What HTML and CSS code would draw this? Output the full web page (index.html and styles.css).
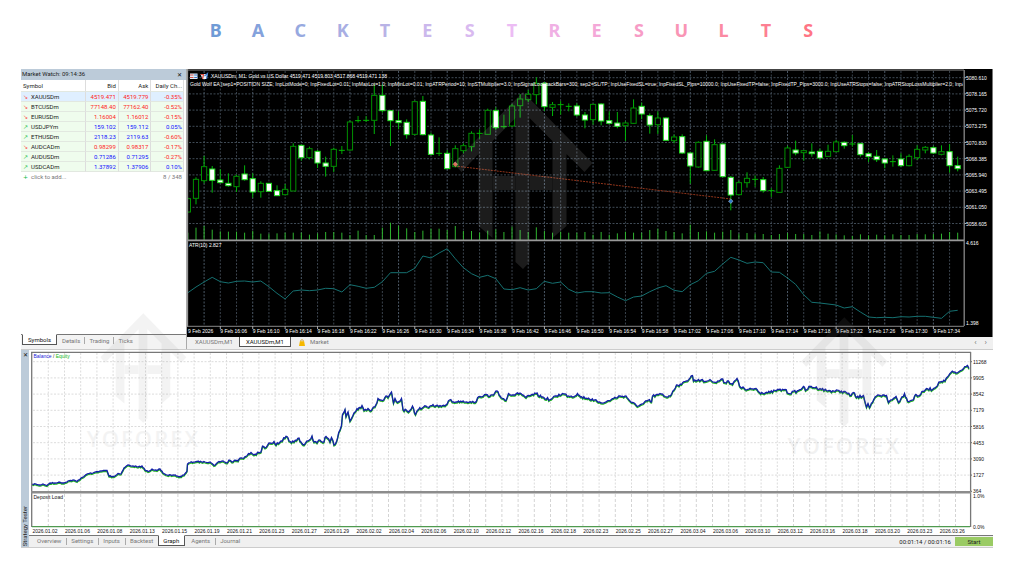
FILE: index.html
```html
<!DOCTYPE html>
<html lang="en">
<head>
<meta charset="utf-8">
<title>Backtest Results</title>
<link rel="stylesheet" href="styles.css">
</head>
<body>
<svg class="defs" aria-hidden="true">
  <symbol id="arrow-mark" viewBox="0 0 139 177">
    <path d="M69.5 0 139 71 131 80 113 62V134L99 146V49L76 26V170L69.500 177 62 170V26L39 49V146L25 134V62L8 80 0 71Z"/>
    <path d="M39 84H62V98H39ZM76 84H99V98H76Z"/>
  </symbol>
</svg>

<h1 class="title" aria-label="Backtest Results">
  <span>B</span><span>A</span><span>C</span><span>K</span><span>T</span><span>E</span><span>S</span><span>T</span><span>R</span><span>E</span><span>S</span><span>U</span><span>L</span><span>T</span><span>S</span>
</h1>

<main class="terminal">
  <div class="upper">
    <section class="watch">
      <header class="watch-head">
        <span>Market Watch: 09:14:36</span>
        <button class="close" type="button" aria-label="Close Market Watch">✕</button>
      </header>
      <table class="quotes">
        <thead><tr><th>Symbol</th><th>Bid</th><th>Ask</th><th>Daily Ch...</th></tr></thead>
        <tbody>
          <tr class="selected"><td><i class="dn">↘</i>XAUUSDm</td><td class="red">4519.471</td><td class="red">4519.779</td><td class="red">-0.35%</td></tr>
          <tr><td><i class="dn">↘</i>BTCUSDm</td><td class="red">77148.40</td><td class="red">77162.40</td><td class="red">-0.52%</td></tr>
          <tr><td><i class="dn">↘</i>EURUSDm</td><td class="red">1.16004</td><td class="red">1.16012</td><td class="red">-0.15%</td></tr>
          <tr><td><i class="up">↗</i>USDJPYm</td><td class="blue">159.102</td><td class="blue">159.112</td><td class="blue">0.05%</td></tr>
          <tr><td><i class="up">↗</i>ETHUSDm</td><td class="blue">2118.23</td><td class="blue">2119.63</td><td class="red">-0.60%</td></tr>
          <tr><td><i class="dn">↘</i>AUDCADm</td><td class="red">0.98299</td><td class="red">0.98317</td><td class="red">-0.17%</td></tr>
          <tr><td><i class="up">↗</i>AUDUSDm</td><td class="blue">0.71286</td><td class="blue">0.71295</td><td class="red">-0.27%</td></tr>
          <tr><td><i class="up">↗</i>USDCADm</td><td class="blue">1.37892</td><td class="blue">1.37906</td><td class="blue">0.10%</td></tr>
        </tbody>
      </table>
      <div class="watch-add"><span><i class="up">+</i>click to add...</span><span>8 / 348</span></div>
      <nav class="tabs watch-tabs">
        <button class="tab active" type="button">Symbols</button>
        <button class="tab" type="button">Details</button>
        <button class="tab" type="button">Trading</button>
        <button class="tab" type="button">Ticks</button>
      </nav>
    </section>

    <section class="chart">
      <svg id="price" class="plot dark" viewBox="187 69 806 268" role="img" aria-label="XAUUSDm M1 price chart"></svg>
      <nav class="tabs chart-tabs">
        <button class="tab" type="button">XAUUSDm,M1</button>
        <button class="tab active" type="button">XAUUSDm,M1</button>
        <button class="tab market" type="button">
          <svg class="bag" viewBox="0 0 7 8" aria-hidden="true"><path d="M2 3V1.500Q3.500 0 5 1.500V3" fill="none" stroke="#c99a2a"/><path d="M1 2.500H6L7 8H0Z" fill="#f6b800"/></svg>Market
        </button>
        <span class="arrows"><button type="button" aria-label="Scroll left">‹</button><button type="button" aria-label="Scroll right">›</button></span>
      </nav>
    </section>
  </div>

  <section class="tester">
    <aside class="rail">
      <button class="close" type="button" aria-label="Close Strategy Tester">✕</button>
      <span class="rail-name">Strategy Tester</span>
    </aside>
    <div class="tester-body">
      <svg id="balance" class="plot" viewBox="29 351 964 184" role="img" aria-label="Balance and equity graph"></svg>
      <footer class="tester-bar">
        <nav class="tabs tester-tabs">
          <button class="tab" type="button">Overview</button>
          <button class="tab" type="button">Settings</button>
          <button class="tab" type="button">Inputs</button>
          <button class="tab" type="button">Backtest</button>
          <button class="tab active" type="button">Graph</button>
          <button class="tab" type="button">Agents</button>
          <button class="tab" type="button">Journal</button>
        </nav>
        <span class="elapsed">00:01:14 / 00:01:16</span>
        <button class="start" type="button">Start</button>
      </footer>
    </div>
  </section>

  <div class="brand brand-left" aria-hidden="true"><svg><use href="#arrow-mark"/></svg><span>YOFOREX</span></div>
  <div class="brand brand-right" aria-hidden="true"><svg><use href="#arrow-mark"/></svg><span>YOFOREX</span></div>
</main>
<script src="charts.js"></script>
</body>
</html>
```

FILE: styles.css
```css
* { box-sizing: border-box; }

body {
  margin: 0;
  background: #fff;
  color: #222;
  font-family: Roboto, "Noto Sans", sans-serif;
  font-size: 6px;
  line-height: 10px;
}

button {
  margin: 0;
  padding: 0;
  border: 0;
  background: none;
  color: inherit;
  font: inherit;
}

.defs { position: absolute; width: 0; height: 0; }

.title {
  display: grid;
  grid-template-columns: repeat(15, 1fr);
  width: 62%;
  height: 69px;
  margin: 0 auto;
  padding: 18px 0 0;
  font-family: "Noto Sans", sans-serif;
  font-size: 18px;
  font-weight: 700;
  line-height: 24px;
  text-align: center;
}
.title span:nth-child(1) { color: #6f9bd6; }
.title span:nth-child(2) { color: #84a2dc; }
.title span:nth-child(3) { color: #97a9e0; }
.title span:nth-child(4) { color: #a8aee3; }
.title span:nth-child(5) { color: #b9b3e6; }
.title span:nth-child(6) { color: #cbb8ec; }
.title span:nth-child(7) { color: #d9baf0; }
.title span:nth-child(8) { color: #ecbcf4; }
.title span:nth-child(9) { color: #f0b0e4; }
.title span:nth-child(10) { color: #f4a8d8; }
.title span:nth-child(11) { color: #f79cc6; }
.title span:nth-child(12) { color: #f995b5; }
.title span:nth-child(13) { color: #fb8aa2; }
.title span:nth-child(14) { color: #fd7f92; }
.title span:nth-child(15) { color: #ff7585; }

.terminal {
  position: relative;
  margin: 0 31px 0 21px;
}

.upper {
  display: grid;
  grid-template-columns: 166fr 806fr;
}

.plot { display: block; width: 100%; height: auto; }
.plot text { font-family: "Liberation Sans", Arial, sans-serif; font-size: 5px; }
.dark { background: #000; }

/* Market watch */
.watch {
  display: flex;
  flex-direction: column;
  border-right: 1px solid #aaa;
}
.watch-head {
  display: flex;
  justify-content: space-between;
  height: 11px;
  padding: 0 4px 0 1px;
  background: #bccbd9;
}
.close { font-size: 6px; line-height: 10px; color: #111; }

.quotes {
  width: 163px;
  max-width: 100%;
  border-collapse: separate;
  border-spacing: 0;
  table-layout: fixed;
}
.quotes th, .quotes td {
  height: 10px;
  padding: 0 2px;
  border-right: 1px solid #ddd;
  border-bottom: 1px solid #e2e8e0;
  line-height: 9px;
  text-align: right;
  white-space: nowrap;
}
.quotes th { height: 12px; width: 20%; font-weight: 400; }
.quotes th:first-child { width: 40%; }
.quotes th:first-child, .quotes td:first-child { text-align: left; }
.quotes td { background: #effced; }
.quotes td:last-child, .quotes th:last-child { padding: 0 1px; }
.quotes .selected td { background: #dfefff; }
.red { color: #f22; }
.blue { color: #11f; }
i { display: inline-block; width: 8px; font-family: "DejaVu Sans", sans-serif; font-style: normal; line-height: 8px; }
.dn { color: #f44; }
.up { color: #1b4; }
.watch-add {
  display: flex;
  justify-content: space-between;
  padding: 0 4px 0 2px;
  color: #777;
}

/* Tab strips */
.tabs { display: flex; color: #777; }
.tab { position: relative; line-height: 9px; white-space: nowrap; }
.tab.active { border: 1px solid #555; background: #fff; color: #111; }
.watch-tabs {
  gap: 9px;
  height: 15px;
  margin-top: auto;
  padding: 0 0 0 1px;
  border-top: 1px solid #777;
  background: #f3f3f3;
}
.watch-tabs .tab.active { margin: -1px -4px 0 0; padding: 0 5px; border-top-color: #fff; height: 11px; }
.watch-tabs .tab { height: 10px; }
.watch-tabs .tab + .tab + .tab::before,
.tester-tabs .tab + .tab:not(.active):not(.active + .tab)::before {
  content: "";
  position: absolute;
  left: -5px;
  top: 2px;
  height: 7px;
  border-left: 1px solid #aaa;
}
.chart-tabs {
  height: 12px;
  padding-left: 8px;
  background: #f0f0f0;
}
.chart-tabs .tab { height: 10px; line-height: 10px; }
.chart-tabs .tab.active { margin: 0 8px 0 6px; padding: 0 6px; border-top: 0; line-height: 9px; }
.market { display: flex; align-items: center; gap: 5px; }
.bag { width: 6px; height: 7px; }
.arrows { display: flex; gap: 8px; margin-left: auto; padding-right: 6px; font-size: 8px; }

/* Strategy tester */
.tester {
  display: grid;
  grid-template-columns: 8px 1fr;
  border-top: 1px solid #ccc;
  border-bottom: 1px solid #ccc;
}
.rail {
  display: flex;
  flex-direction: column;
  align-items: center;
  justify-content: space-between;
  padding-bottom: 1px;
  background: #bccbd9;
}
.rail-name { writing-mode: vertical-rl; transform: rotate(180deg); line-height: 8px; }
.tester-body { padding-top: 1px; }
.tester-bar {
  display: flex;
  align-items: center;
  height: 12px;
  border-top: 1px solid #777;
  background: #f0f0f0;
}
.tester-tabs { flex: 1; gap: 10px; padding-left: 8px; }
.tester-tabs .tab { height: 11px; padding-bottom: 2px; }
.tester-tabs .tab.active { margin: -1px -4px 0 -5px; padding: 0 5px 1px 4px; border-top-color: #fff; height: 11px; }
.elapsed { margin-right: 4px; }
.start {
  width: 38px;
  height: 9px;
  background: #9acb64;
  line-height: 9px;
}

/* Watermarks over the workspace */
.brand {
  position: absolute;
  top: 248px;
  display: flex;
  flex-direction: column;
  align-items: center;
  gap: 6px;
  color: #888;
  opacity: 0.11;
  transform: translateX(-50%);
  pointer-events: none;
}
.brand svg { width: 86px; height: 110px; fill: currentColor; }
.brand span { font-family: "Open Sans", sans-serif; font-size: 22px; font-weight: 600; line-height: 24px; letter-spacing: 2px; }
.brand-left { top: 244px; left: 12.6%; gap: 3px; opacity: 0.09; }
.brand-right { left: 84.7%; }
```

FILE: charts.js
```js
const NS = "http://www.w3.org/2000/svg";

function add(parent, name, attrs, text) {
  const node = document.createElementNS(NS, name);
  for (const key in attrs) node.setAttribute(key, attrs[key]);
  if (text !== undefined) node.textContent = text;
  parent.appendChild(node);
  return node;
}
const line = (p, x1, y1, x2, y2, stroke, extra) =>
  add(p, "line", Object.assign({ x1, y1, x2, y2, stroke }, extra));

/* high, body top, body bottom, low, kind: u = hollow, d = filled, x = doji */
const candles = `395 398 438 440 u|334 340 397 415 u|270 302 344 352 u|300 309 343 380 d|310 342 350 350 d|322 352 359 362 d|326 331 362 378 u|298 324 341 344 d
322 338 378 395 d|346 352 377 395 u|352 352 376 376 d|358 374 389 389 d|354 370 386 388 u|232 241 375 375 u|235 238 275 284 d|242 248 275 280 u
252 256 291 306 d|272 291 301 332 d|245 250 301 318 u|240 253 253 264 x|164 168 252 254 u|150 164 164 170 x|150 163 163 168 x|55 88 163 204 u
55 88 134 140 d|132 134 164 240 d|136 164 170 190 d|160 169 206 218 d|104 107 205 208 u|90 106 206 208 d|200 207 265 268 d|214 262 262 270 x
252 262 308 308 d|238 248 302 304 u|232 239 254 262 u|196 202 242 256 u|190 202 202 218 x|128 133 205 206 u|124 134 185 192 d|146 182 182 188 x
114 120 180 182 u|84 99 119 155 u|72 85 101 108 u|34 52 86 115 u|48 52 122 135 d|108 116 124 150 u|105 116 116 146 x|112 121 121 136 x
112 120 147 152 d|138 147 162 187 d|114 115 161 176 u|112 114 165 178 d|136 164 172 175 d|138 171 181 187 d|166 171 179 225 u|100 126 172 174 u
110 121 144 160 d|142 149 177 203 d|136 156 176 204 u|154 156 223 224 d|206 213 224 232 u|205 212 261 264 d|258 261 300 353 d|226 229 303 305 u
208 226 314 316 d|220 236 313 315 u|232 234 332 334 d|330 334 387 433 d|345 350 386 388 u|319 337 350 365 u|328 340 340 363 x|333 341 374 380 d
366 374 374 393 x|298 307 379 380 u|240 246 304 306 u|224 252 261 268 d|252 254 260 284 u|232 258 263 272 d|248 256 276 280 d|236 256 271 272 u
222 228 257 258 u|226 229 239 248 d|207 234 234 242 x|230 233 266 272 d|258 263 272 288 d|252 271 281 288 d|276 279 291 307 d|268 287 287 302 x
262 279 299 303 d|265 271 299 301 u|238 250 275 282 u|240 244 252 262 u|240 245 261 264 d|238 257 265 268 u|234 257 299 320 d|272 299 308 316 d`
  .split(/[|\n]/).map(s => s.trim().split(" "));

const volumes = [500,485,480,491,496,497,497,500,495,503,503,502,500,500,500,506,502,498,498,500,507,494,507,507,485,470,479,487,498,494,488,488,492,480,495,495,500,494,490,498,482,492,498,484,495,500,497,500,500,498,506,498,506,502,497,500,500,492,488,495,498,502,476,498,496,500,497,492,503,501,503,504,507,504,501,504,504,507,496,503,505,508,510,505,508,506,508,505,507,507,504,505,504,503,498,500];

const atr = [170,153,138,124,137,141,136,135,138,135,152,172,189,165,162,164,162,157,158,168,146,151,157,154,137,110,110,110,97,60,66,51,38,68,95,113,124,118,128,159,161,155,162,158,136,142,138,160,171,167,167,171,170,183,194,183,180,167,156,149,163,167,146,134,112,106,84,64,72,82,78,80,108,109,126,145,176,199,201,204,207,216,212,228,243,245,244,245,242,243,241,241,244,247,226,223];

const barX = i => 187.9 + i * 8.103;
const priceY = t => 66 + t / 3;
const atrY = t => 236 + t / 3;

function drawPrice() {
  const svg = document.getElementById("price");
  const clip = add(add(svg, "defs", {}), "clipPath", { id: "pane" });
  add(clip, "rect", { x: 188, y: 70, width: 775, height: 258 });

  const dots = { "stroke-dasharray": "2 1.500", "stroke-width": 1 };
  for (let i = 2; i < 96; i += 2) {
    const tone = i % 6 === 2 ? "#4c5967" : "#3a434d";
    line(svg, barX(i), 71, barX(i), 239, tone, dots);
    line(svg, barX(i), 242, barX(i), 325, tone, dots);
  }
  for (let n = 0; n < 10; n++) {
    const y = 77.7 + n * 16.2;
    line(svg, 189, y, 963, y, "#3f4a55", dots);
    line(svg, 964, y, 966, y, "#aaa");
    add(svg, "text", { x: 966, y: y + 2, fill: "#fff" }, (5080.61 - n * 2.445).toFixed(3));
  }

  volumes.forEach((v, i) => line(svg, barX(i), priceY(v), barX(i), 240, "#2fb42f"));

  candles.forEach(([hi, top, bot, lo, kind], i) => {
    const x = barX(i), t = priceY(+top), b = priceY(+bot);
    if (kind === "x") {
      line(svg, x, priceY(+hi), x, priceY(+lo), "#00a000");
      line(svg, x - 3, t, x + 3, t, "#00b800");
      return;
    }
    line(svg, x, priceY(+hi), x, t, "#00b40a");
    line(svg, x, b, x, priceY(+lo), "#00b40a");
    add(svg, "rect", { x: x - 2.6, y: t, width: 5.2, height: Math.max(b - t, 1.500), fill: kind === "d" ? "#fff" : "#000", stroke: kind === "d" ? "#20dc20" : "#009000" });
  });

  line(svg, 455, 166, 731, 199, "#90341a", { "stroke-dasharray": "2 1" });
  add(svg, "path", { d: "M453 164.300 455.200 162 457.500 164.300 455.200 166.500Z", fill: "#e0604a", stroke: "#c9a48c", "stroke-width": 0.6 });
  add(svg, "path", { d: "M728.500 201.200 730.800 199 733 201.200 730.800 203.500Z", fill: "#2f78c8", stroke: "#a8c4dc", "stroke-width": 0.6 });

  add(svg, "use", { href: "#arrow-mark", x: 453.5, y: 92, width: 139, height: 177, fill: "#fff", opacity: 0.11 });

  const pts = atr.map((v, i) => barX(i).toFixed(1) + "," + atrY(v).toFixed(1)).join(" ");
  add(svg, "polyline", { points: pts, fill: "none", stroke: "#157070" });

  line(svg, 187, 70, 964, 70, "#888");
  line(svg, 187.5, 69, 187.5, 327, "#999", { "stroke-width": 1.3 });
  line(svg, 187, 240.4, 964, 240.4, "#999", { "stroke-width": 1.6 });
  line(svg, 187, 326.3, 964, 326.3, "#888");
  line(svg, 964.2, 70, 964.2, 326, "#888", { "stroke-width": 1.3 });
  line(svg, 992.5, 69, 992.5, 337, "#777");

  /* Header badges */
  add(svg, "rect", { x: 190, y: 73.500, width: 7.500, height: 5.500, fill: "#dfe9f5" });
  add(svg, "path", { d: "M190 75H193.500M190 77.500H193.500", stroke: "#d8564a" });
  add(svg, "path", { d: "M194.200 75H197.500M194.200 77.500H197.500", stroke: "#3a78c8" });
  add(svg, "path", { d: "M200.500 74H208L206 79H202.500Z", fill: "#f0f4fa" });
  add(svg, "path", { d: "M200.800 74.500H203.500L202.500 79", fill: "none", stroke: "#e04a3a", "stroke-width": 1.2 });
  add(svg, "path", { d: "M204.500 76 207.500 73.500 206.500 79", fill: "none", stroke: "#3a78c8", "stroke-width": 1.1 });

  const white = { fill: "#fff", "clip-path": "url(#pane)" };
  const label = (x, y, t) => add(svg, "text", Object.assign({ x, y }, white), t);
  label(211, 78, "XAUUSDm, M1:  Gold vs US Dollar  4519.471 4519.803 4517.868 4519.471  138");
  label(190, 86, [
    "Gold Wolf EA [sep1=POSITION SIZE", "InpLotMode=0", "InpFixedLot=0.01", "InpMaxLot=1.0", "InpMinLot=0.01",
    "InpATRPeriod=10", "InpSTMultiplier=3.0", "InpSignalLookbackBars=300", "sep2=SL/TP", "InpUseFixedSL=true",
    "InpFixedSL_Pips=10000.0", "InpUseFixedTP=false", "InpFixedTP_Pips=3000.0", "InpUseATRStops=false",
    "InpATRStopLossMultiplier=2.0", "InpATRTakeProfit"
  ].join("; "));
  label(189, 247, "ATR(10) 2.827");
  add(svg, "text", { x: 966, y: 245, fill: "#fff" }, "4.616");
  add(svg, "text", { x: 966, y: 325, fill: "#fff" }, "1.398");

  add(svg, "text", { x: 188, y: 333, fill: "#fff" }, "9 Feb 2026");
  for (let n = 0; n < 23; n++) {
    const minutes = 16 * 60 + 6 + n * 4;
    const x = barX(4 + n * 4);
    line(svg, x, 326, x, 329, "#aaa");
    const time = Math.floor(minutes / 60) + ":" + String(minutes % 60).padStart(2, "0");
    add(svg, "text", { x, y: 333, fill: "#fff" }, "9 Feb " + time);
  }
}

const balance = [32,484,36,484,39,485,43,484,47,485.5,50,483,55,483,59,482,64,483,68,481,73,480,77,481.5,81,478,85,475.5,88,473.5,93,473,97,471.5,101,471,107,470.5,109,476,114,476.5,118,473.5,121,474,124,468,128,465,133,466,138,467,142,466,145,470,148,471.5,152,469,157,470.5,160,469,163,473,167,475,173,475,180,476.5,184,475,187,471,187.5,464,190,462.5,197,461.5,205,462,210,462,214,465.5,219,461.5,223,461,227,463,229,460,232,462,235,460,238,461,240,458,246,456.5,251,452.5,254,455,261,452,262.5,446,265,448,270,443,274,441.5,276,445,281,441,285,438,287,436.5,289,441,294,442,299,438,301,442,304,445,308,441,312,436,314,442,317,443,320,440,323,442.5,326,436.5,330,442,331.5,437.5,334,445,336.7,441,338.7,432.5,341.5,425.5,342.5,414.5,345,409.5,346,416.5,348,412,350,421,354,413,357,408.5,360,407.5,362,405.5,364,410.5,368,408.5,371.5,410.5,376,404.5,378,398.5,382.5,400.5,386,396,388,397.5,391.5,392,393.5,403,395,398.5,397.5,402.5,401.5,398.5,403,409.5,408.5,412,412.5,406,415.5,414.5,418.5,409.5,423.5,407,430,406,433,404.5,435,406.5,445,406,449.5,400,453.5,402,458.5,401,470,401.5,474,402.5,480,396.5,484.5,394.5,488.5,396.5,493.5,395,497,391,500,396,506,400.5,508.5,393.5,515,395,520,393,526,397.5,536,393.5,541.5,397,550,399.5,556.5,396,562.5,393.5,568.5,396,575,396,577.5,393.5,580.5,397,588.5,398,593.5,400.5,604.5,402.5,613.5,398.5,620,396,626,396,631.5,402.5,638.5,406,643.5,403.5,648.5,400,651.5,402,652.5,396,658.5,394.5,660,393.5,666.5,397,671.5,394.5,676.5,385,681.5,384.5,686.5,381,692.5,375.5,693.5,381,698.5,379.5,705,381.5,710,379.5,716.5,382.5,721.5,379,725,382.5,728.5,381,732.5,384.5,737,378.5,739.5,386,746.5,390,756,388.5,759.5,392.5,770,392.5,775,390.5,785,389.5,788.5,393.5,798.5,390.5,803.5,386.5,805.5,390.5,810,386.5,820,388.5,826.5,390.5,845,391.5,850,395.5,853.5,392.5,856.5,397.5,863.5,395.5,866.5,407,868,403.5,869.5,407.5,872.5,402.5,876.5,396,886.5,395.5,888.5,402.5,896,396.5,898.5,402.5,904.5,393.5,907.5,401,913.5,399.5,915.5,394.5,918.5,396,926.5,388.5,932.5,389.5,940,382,945,381,951,372.5,958.5,372,963.5,368.5,967.5,365.5,969,368.5];

const dates = "01.02 01.06 01.08 01.13 01.15 01.19 01.21 01.23 01.27 01.29 02.02 02.04 02.06 02.10 02.12 02.16 02.18 02.23 02.25 02.27 03.04 03.06 03.10 03.12 03.16 03.18 03.20 03.23 03.26".split(" ");

function tradeSteps(flat) {
  const out = [];
  let seed = 7;
  for (let i = 0; i + 3 < flat.length; i += 2) {
    const [x1, y1, x2, y2] = flat.slice(i, i + 4);
    const steps = Math.max(1, Math.round((x2 - x1) / 1.2));
    const swing = x1 < 240 ? 1.2 : 2.6;
    for (let s = 0; s < steps; s++) {
      seed = (seed * 16807) % 2147483647;
      const jitter = s ? (seed / 2147483647 - 0.5) * swing : 0;
      out.push([x1 + (x2 - x1) * s / steps, y1 + (y2 - y1) * s / steps + jitter]);
    }
  }
  out.push(flat.slice(-2));
  return out;
}

function drawBalance() {
  const svg = document.getElementById("balance");
  const dots = { "stroke-dasharray": "2 1.500" };
  for (let n = 0; n < 58; n++) {
    const x = 48.3 + n * 16.2;
    if (x > 968) break;
    line(svg, x, 353, x, 491, "#dcdcdc", dots);
    line(svg, x, 494, x, 526, "#d4d4d4", { "stroke-dasharray": "3 2" });
  }
  for (let n = 0; n < 9; n++) {
    const y = 361.7 + n * 16.2;
    if (n < 8) line(svg, 33, y, 970, y, "#dcdcdc", dots);
    line(svg, 970, y, 972, y, "#666");
    add(svg, "text", { x: 973, y: y + 2, fill: "#111" }, String(11268 - n * 1363));
  }

  const steps = tradeSteps(balance);
  const points = dy => steps.map(([x, y]) => x.toFixed(1) + "," + (y + dy).toFixed(1)).join(" ");
  add(svg, "polyline", { points: points(1), fill: "none", stroke: "#22b422", "stroke-width": 1.3 });
  add(svg, "polyline", { points: points(0), fill: "none", stroke: "#1420a8", "stroke-width": 1.3 });

  line(svg, 31, 352.3, 971, 352.3, "#777", { "stroke-width": 1.3 });
  line(svg, 31.700, 352, 31.700, 527, "#777", { "stroke-width": 1.3 });
  line(svg, 970.6, 352, 970.6, 527, "#777", { "stroke-width": 1.3 });
  line(svg, 31, 492.3, 971, 492.3, "#8c8c8c", { "stroke-width": 2.4 });
  line(svg, 32, 526.7, 970, 526.7, "#4f9a4f", { "stroke-width": 1.2 });

  const caption = add(svg, "text", { x: 33.500, y: 358, fill: "#333" });
  add(caption, "tspan", { fill: "#2222d8" }, "Balance");
  add(caption, "tspan", {}, " / ");
  add(caption, "tspan", { fill: "#16b816" }, "Equity");
  add(svg, "text", { x: 33.500, y: 499, fill: "#111" }, "Deposit Load");
  add(svg, "text", { x: 973, y: 498, fill: "#111" }, "1.0%");
  add(svg, "text", { x: 973, y: 529, fill: "#111" }, "0.0%");
  dates.forEach((d, n) => add(svg, "text", { x: 32.500 + n * 32.4, y: 532.500, fill: "#111" }, "2026." + d));
}

drawPrice();
drawBalance();
```
